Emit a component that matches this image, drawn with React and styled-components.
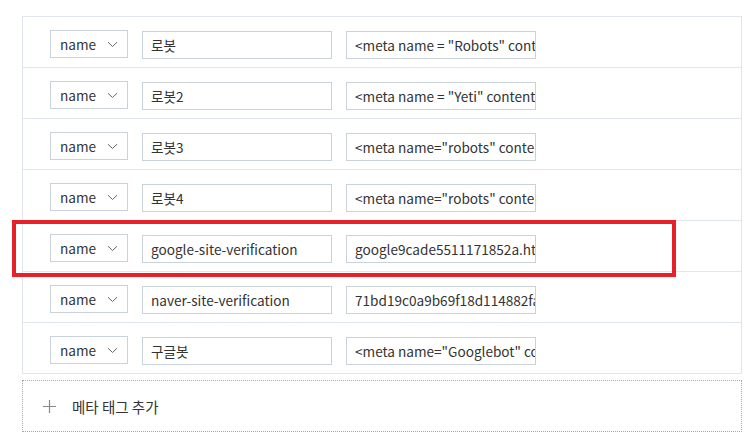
import React from 'react';
import styled, { createGlobalStyle } from 'styled-components';

const GlobalStyle = createGlobalStyle`
  html, body {
    margin: 0;
    padding: 0;
    background: #fff;
  }
  body {
    font-family: "Noto Sans CJK KR", "Noto Sans", sans-serif;
    color: #333;
    font-size: 13.6px;
  }
`;

const Page = styled.div`
  position: relative;
  width: 748px;
  height: 436px;
  padding: 16px 0 0 22px;
  box-sizing: border-box;
`;

const Table = styled.div`
  width: 720px;
  border: 1px solid #e1e6ee;
  box-sizing: border-box;
`;

const Row = styled.div`
  display: flex;
  align-items: center;
  gap: 14px;
  height: ${p => (p.first ? '50px' : '51px')};
  padding: 6px 0 0 27px;
  box-sizing: border-box;
  border-top: ${p => (p.first ? 'none' : '1px solid #e1e6ee')};
`;

const Select = styled.div`
  display: flex;
  align-items: center;
  justify-content: space-between;
  width: 78px;
  height: 28px;
  padding: 0 9px 0 9px;
  box-sizing: border-box;
  border: 1px solid #c9d1da;
  margin-top: -2px;
  color: #333;
`;

const Field = styled.div`
  width: 190px;
  height: 28px;
  line-height: 26px;
  padding-left: 8px;
  box-sizing: border-box;
  border: 1px solid #c9d1da;
  white-space: nowrap;
  overflow: hidden;
  color: #333;
`;

const AddButton = styled.div`
  display: flex;
  align-items: center;
  gap: 16px;
  width: 720px;
  height: 52px;
  margin-top: 6px;
  padding: 0 0 0 20px;
  box-sizing: border-box;
  border: 1px dotted #a9a9a9;
  color: #333;
  font-size: 14.5px;
`;

const Highlight = styled.div`
  position: absolute;
  left: 12px;
  top: 220px;
  width: 664px;
  height: 57px;
  border: 4px solid #e8202a;
  box-sizing: border-box;
  pointer-events: none;
`;

const Chevron = () => (
  <svg width="11" height="7" viewBox="0 0 11 7" fill="none">
    <path d="M1 1.2l4.5 4.3L10 1.2" stroke="#666" strokeWidth="1" />
  </svg>
);

const Plus = () => (
  <svg width="13" height="13" viewBox="0 0 13 13" fill="none">
    <path d="M6.5 0v13M0 6.5h13" stroke="#888" strokeWidth="1.2" />
  </svg>
);

const rows = [
  { name: '로봇', value: '<meta name = "Robots" content="noindex">' },
  { name: '로봇2', value: '<meta name = "Yeti" content="noindex">' },
  { name: '로봇3', value: '<meta name="robots" content="noindex">' },
  { name: '로봇4', value: '<meta name="robots" content="nofollow">' },
  { name: 'google-site-verification', value: 'google9cade5511171852a.html' },
  { name: 'naver-site-verification', value: '71bd19c0a9b69f18d114882fa3c1' },
  { name: '구글봇', value: '<meta name="Googlebot" content="noindex">' },
];

const App = () => (
  <Page>
    <GlobalStyle />
    <Table>
      {rows.map((r, i) => (
        <Row key={i} first={i === 0}>
          <Select>
            <span>name</span>
            <Chevron />
          </Select>
          <Field>{r.name}</Field>
          <Field>{r.value}</Field>
        </Row>
      ))}
    </Table>
    <AddButton>
      <Plus />
      <span>메타 태그 추가</span>
    </AddButton>
    <Highlight />
  </Page>
);

export default App;
